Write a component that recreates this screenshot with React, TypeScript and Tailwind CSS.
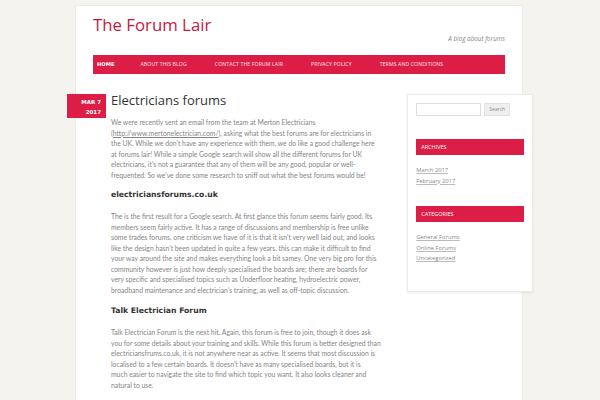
import React from "react";

const body = "font-['Open_Sans',sans-serif]";
const head = "font-['DejaVu_Sans',sans-serif]";
const para = "font-['Lato',sans-serif]";

export default function App() {
  const nav = ["HOME", "ABOUT THIS BLOG", "CONTACT THE FORUM LAIR", "PRIVACY POLICY", "TERMS AND CONDITIONS"];
  return (
    <div className={`w-[600px] h-[400px] overflow-hidden bg-[#f4f3ef] pt-[5px] ${body}`}>
      <div className="ml-[75px] w-[448px] bg-white border border-[#ebeae6] min-h-[420px]">
        <header className="px-[17px] pt-[7px] pb-[20px]">
          <div className={`${body} text-[16.8px] leading-[24px] text-[#c7193f]`}>The Forum Lair</div>
          <div className="text-right text-[6.3px] italic text-[#888] leading-[10px] -mt-[3px]">A blog about forums</div>
          <nav className="mt-[11px] h-[19px] bg-[#dc1e46] flex items-center pl-[4px] text-[5.2px] text-white/85">
            {nav.map((n, i) => (
              <span key={n} className={i === 0 ? `${head} font-bold text-white mr-[26px]` : "mr-[28px] tracking-[0.1px]"}>{n}</span>
            ))}
          </nav>
        </header>
        <div className="flex">
          <div className="flex ml-[-9px] w-[327px]">
            <div className="w-[39px] h-[24px] shrink-0 bg-[#dc1e46] text-white text-[5.5px] font-bold leading-[10px] flex flex-col items-end justify-center pr-[5px] pt-[1px]">
              <span className={head}>MAR 7</span>
              <span className={head}>2017</span>
            </div>
            <article className={`ml-[5px] w-[272px] text-[6.8px] leading-[10.5px] text-[#858585]`}>
              <h1 className={`${body} text-[13px] leading-[15px] text-[#333] -mt-[1px]`}>Electricians forums</h1>
              <p className={`${para} mt-[9px]`}>
                We were recently sent an email from the team at Merton Electricians (<span className="underline">http://www.mertonelectrician.com/</span>), asking what the best forums are for electricians in<br />the UK. While we don't have any experience with them, we do like a good challenge here<br />at forums lair! While a simple Google search will show all the different forums for UK electricians, it's not a guarantee that any of them will be any good, popular or well-frequented. So we've done some research to sniff out what the best forums would be!
              </p>
              <h2 className={`${head} font-bold text-[7.7px] leading-[12px] text-[#333] mt-[9px]`}>electriciansforums.co.uk</h2>
              <p className={`${para} mt-[10px]`}>
                The is the first result for a Google search. At first glance this forum seems fairly good. Its members seem fairly active. It has a range of discussions and membership is free unlike some trades forums. one criticism we have of it is that it isn't very well laid out, and looks like the design hasn't been updated in quite a few years. this can make it difficult to find your way around the site and makes everything look a bit samey. One very big pro for this community however is just how deeply specialised the boards are; there are boards for<br />very specific and specialised topics such as Underfloor heating, hydroelectric power, broadband maintenance and electrician's training, as well as off-topic discussion.
              </p>
              <h2 className={`${head} font-bold text-[7.7px] leading-[12px] text-[#333] mt-[10px]`}>Talk Electrician Forum</h2>
              <p className={`${para} mt-[10px]`}>
                Talk Electrician Forum is the next hit. Again, this forum is free to join, though it does ask you for some details about your training and skills. While this forum is better designed than electriciansfrums.co.uk, it is not anywhere near as active. It seems that most discussion is localised to a few certain boards. It doesn't have as many specialised boards, but it is<br />much easier to navigate the site to find which topic you want. It also looks cleaner and natural to use.
              </p>
            </article>
          </div>
          <aside className="ml-[14px] w-[126px] mr-[-11px] h-[198px] bg-white border border-[#ebeae6] shadow-[0_1px_2px_rgba(0,0,0,0.08)] px-[8px] pt-[8px]">
            <div className="flex items-center gap-[3px]">
              <div className="w-[65px] h-[13px] border border-[#ddd] bg-white"></div>
              <div className="w-[26px] h-[13px] bg-[#efefef] border border-[#e2e2e2] text-[5px] text-[#888] flex items-center justify-center">Search</div>
            </div>
            <div className="mt-[23px] h-[16px] bg-[#dc1e46] text-white text-[5.5px] flex items-center pl-[5px]">ARCHIVES</div>
            <div className="mt-[10px] text-[5.8px] leading-[10.5px] text-[#888] underline decoration-[#bbb] flex flex-col">
              <span>March 2017</span>
              <span>February 2017</span>
            </div>
            <div className="mt-[20px] h-[16px] bg-[#dc1e46] text-white text-[5.5px] flex items-center pl-[5px]">CATEGORIES</div>
            <div className="mt-[10px] text-[5.8px] leading-[10.5px] text-[#888] underline decoration-[#bbb] flex flex-col">
              <span>General Forums</span>
              <span>Online Forums</span>
              <span>Uncategorized</span>
            </div>
          </aside>
        </div>
      </div>
    </div>
  );
}
